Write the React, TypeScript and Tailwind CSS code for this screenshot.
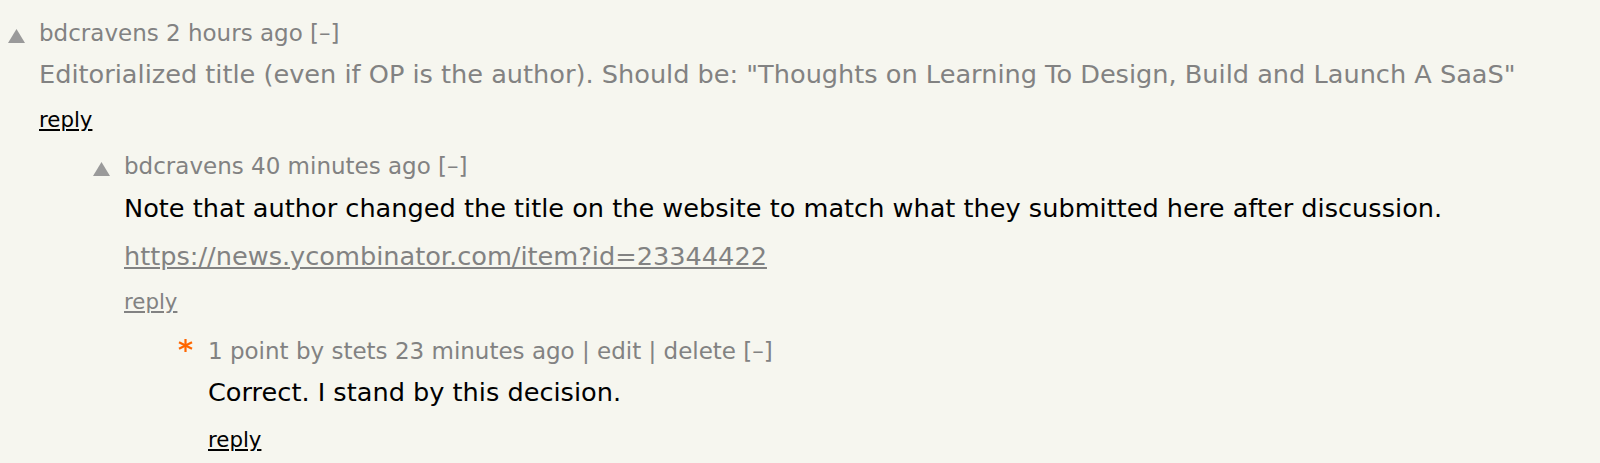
const meta = 'text-[#828282] text-[23px] leading-[30px]'
const body = 'text-[25.6px] leading-[32px]'
const small = 'text-[21.3px] leading-[26px]'

function Arrow({ left, width }: { left: number; width: number }) {
  return (
    <div className="shrink-0 pt-[11px]" style={{ width, paddingLeft: left }}>
      <svg width="17" height="14" viewBox="0 0 17 14" className="block">
        <polygon points="8.5,0 17,14 0,14" fill="#9a9a9a" />
      </svg>
    </div>
  )
}

function Star() {
  return (
    <div className="w-[32px] shrink-0 pt-[3px] pl-[2px]">
      <svg width="15" height="13" viewBox="0 0 15 13" className="block">
        <g stroke="#ff6600" strokeWidth="2.2">
          <line x1="7.5" y1="0" x2="7.5" y2="13" />
          <line x1="1" y1="3.2" x2="14" y2="9.8" />
          <line x1="1" y1="9.8" x2="14" y2="3.2" />
        </g>
      </svg>
    </div>
  )
}

export default function App() {
  return (
    <div className="bg-[#f6f6ef] min-h-[463px] w-full font-['DejaVu_Sans',Verdana,sans-serif] pt-[18px]">
      {/* level 0 */}
      <div className="flex">
        <Arrow left={8} width={39} />
        <div>
          <div className={meta}>bdcravens 2 hours ago [–]</div>
          <div className={`${body} text-[#828282] mt-[10px]`}>
            Editorialized title (even if OP is the author). Should be: "Thoughts on Learning To Design, Build and Launch A SaaS"
          </div>
          <div className={`${small} mt-[17px]`}>
            <a className="text-black underline">reply</a>
          </div>
        </div>
      </div>

      {/* level 1 */}
      <div className="flex pl-[82px] mt-[18px]">
        <Arrow left={11} width={42} />
        <div>
          <div className={meta}>bdcravens 40 minutes ago [–]</div>
          <div className={`${body} text-black mt-[11px]`}>
            Note that author changed the title on the website to match what they submitted here after discussion.
          </div>
          <div className={`${body} mt-[16px]`}>
            <a className="text-[#828282] underline">https://news.ycombinator.com/item?id=23344422</a>
          </div>
          <div className={`${small} mt-[17px]`}>
            <a className="text-[#828282] underline">reply</a>
          </div>
        </div>
      </div>

      {/* level 2 */}
      <div className="flex pl-[176px] mt-[21px]">
        <Star />
        <div>
          <div className={meta}>1 point by stets 23 minutes ago | edit | delete [–]</div>
          <div className={`${body} text-black mt-[10px]`}>Correct. I stand by this decision.</div>
          <div className={`${small} mt-[19px]`}>
            <a className="text-black underline">reply</a>
          </div>
        </div>
      </div>
    </div>
  )
}
